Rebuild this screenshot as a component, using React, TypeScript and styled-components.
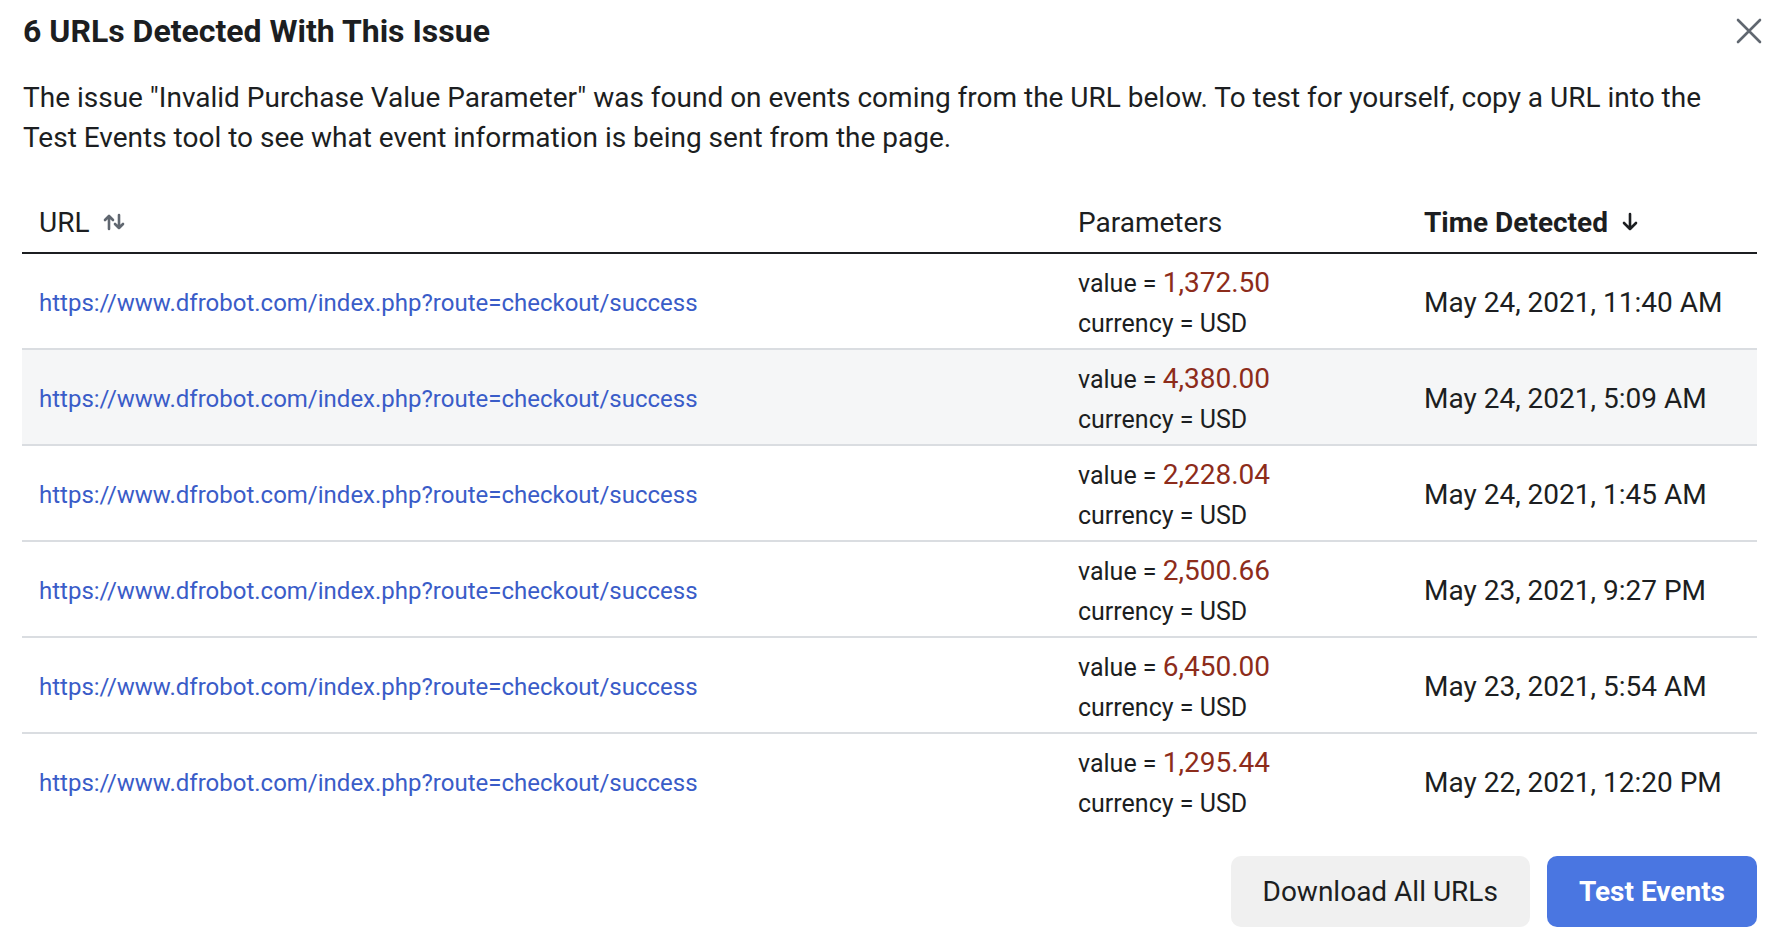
import React from "react";
import styled, { createGlobalStyle } from "styled-components";

const GlobalStyle = createGlobalStyle`
  html, body { margin: 0; padding: 0; background: #ffffff; }
  body { font-family: Roboto, "Noto Sans", "Liberation Sans", sans-serif; color: #1c1e21; }
  * { box-sizing: border-box; }
`;

const Dialog = styled.div`
  width: 1784px;
  height: 938px;
  padding: 0 27px 0 22px;
  display: flex;
  flex-direction: column;
  background: #fff;
`;

const Header = styled.div`
  height: 62px;
  display: flex;
  align-items: center;
  justify-content: space-between;
`;

const Title = styled.h1`
  margin: 0;
  padding-left: 1px;
  font-size: 32px;
  font-weight: 700;
  line-height: 40px;
  color: #1c1e21;
`;

const CloseButton = styled.button`
  width: 36px;
  height: 36px;
  margin-right: -10px;
  padding: 0;
  border: none;
  background: transparent;
  display: flex;
  align-items: center;
  justify-content: center;
  cursor: pointer;
`;

const Description = styled.p`
  margin: 16px 0 0;
  padding-left: 1px;
  max-width: 1720px;
  font-size: 28px;
  line-height: 40px;
  color: #1c1e21;
`;

const Table = styled.div`
  margin-top: 34px;
  display: grid;
  grid-template-columns: 1039px 346px 1fr;
`;

const HeadCell = styled.div<{ $bold?: boolean }>`
  height: 62px;
  padding-left: 17px;
  display: flex;
  align-items: center;
  gap: 13px;
  font-size: 28px;
  font-weight: ${(p) => (p.$bold ? 700 : 400)};
  border-bottom: 2px solid #1c1e21;
  color: #1c1e21;
`;

const Cell = styled.div<{ $shaded?: boolean; $last?: boolean }>`
  height: ${(p) => (p.$last ? 94 : 96)}px;
  padding: 4px 0 0 17px;
  display: flex;
  flex-direction: column;
  justify-content: center;
  background: ${(p) => (p.$shaded ? "#f5f6f7" : "#ffffff")};
  border-bottom: ${(p) => (p.$last ? "none" : "2px solid #dadde1")};
`;

const Link = styled.a`
  font-size: 24px;
  line-height: 32px;
  color: #3a5cc8;
  text-decoration: none;
`;

const ParamLine = styled.div`
  font-size: 25px;
  line-height: 40px;
  color: #1c1e21;
`;

const ParamValue = styled.span`
  font-size: 28px;
  color: #8d2c1b;
`;

const DateText = styled.div`
  font-size: 28px;
  line-height: 40px;
  color: #1c1e21;
`;

const Footer = styled.div`
  margin-top: 28px;
  display: flex;
  justify-content: flex-end;
  gap: 17px;
`;

const Button = styled.button<{ $primary?: boolean }>`
  height: 71px;
  padding: 0 32px;
  border: none;
  border-radius: 10px;
  font-family: inherit;
  font-size: 28px;
  font-weight: ${(p) => (p.$primary ? 700 : 400)};
  color: ${(p) => (p.$primary ? "#ffffff" : "#1c1e21")};
  background: ${(p) => (p.$primary ? "#4a76e1" : "#f0f0f0")};
  cursor: pointer;
`;

const SortIcon = () => (
  <svg width="22" height="18" viewBox="0 0 22 18" fill="none" stroke="#606770" strokeWidth="2.6" strokeLinecap="round" strokeLinejoin="round">
    <path d="M6 16V3M2 7l4-4 4 4" />
    <path d="M16 2v13M12 11l4 4 4-4" />
  </svg>
);

const DownIcon = () => (
  <svg width="18" height="20" viewBox="0 0 18 20" fill="none" stroke="#1c1e21" strokeWidth="2.6" strokeLinecap="round" strokeLinejoin="round">
    <path d="M9 2v15M3 11l6 6 6-6" />
  </svg>
);

const CloseIcon = () => (
  <svg width="26" height="26" viewBox="0 0 26 26" fill="none" stroke="#606770" strokeWidth="2.6" strokeLinecap="round">
    <path d="M2 2l22 22M24 2L2 24" />
  </svg>
);

const rows = [
  { value: "1,372.50", time: "May 24, 2021, 11:40 AM" },
  { value: "4,380.00", time: "May 24, 2021, 5:09 AM" },
  { value: "2,228.04", time: "May 24, 2021, 1:45 AM" },
  { value: "2,500.66", time: "May 23, 2021, 9:27 PM" },
  { value: "6,450.00", time: "May 23, 2021, 5:54 AM" },
  { value: "1,295.44", time: "May 22, 2021, 12:20 PM" },
];

const URL_TEXT = "https://www.dfrobot.com/index.php?route=checkout/success";

export default function App() {
  return (
    <>
      <GlobalStyle />
      <Dialog>
        <Header>
          <Title>6 URLs Detected With This Issue</Title>
          <CloseButton aria-label="Close">
            <CloseIcon />
          </CloseButton>
        </Header>
        <Description>
          The issue "Invalid Purchase Value Parameter" was found on events coming from the URL below. To test for yourself, copy a URL into the Test Events tool to see what event information is being sent from the page.
        </Description>
        <Table>
          <HeadCell>
            URL <SortIcon />
          </HeadCell>
          <HeadCell>Parameters</HeadCell>
          <HeadCell $bold>
            Time Detected <DownIcon />
          </HeadCell>
          {rows.map((r, i) => {
            const shaded = i === 1;
            const last = i === rows.length - 1;
            return (
              <React.Fragment key={i}>
                <Cell $shaded={shaded} $last={last}>
                  <Link href="#">{URL_TEXT}</Link>
                </Cell>
                <Cell $shaded={shaded} $last={last}>
                  <ParamLine>
                    value = <ParamValue>{r.value}</ParamValue>
                  </ParamLine>
                  <ParamLine>currency = USD</ParamLine>
                </Cell>
                <Cell $shaded={shaded} $last={last}>
                  <DateText>{r.time}</DateText>
                </Cell>
              </React.Fragment>
            );
          })}
        </Table>
        <Footer>
          <Button>Download All URLs</Button>
          <Button $primary>Test Events</Button>
        </Footer>
      </Dialog>
    </>
  );
}
